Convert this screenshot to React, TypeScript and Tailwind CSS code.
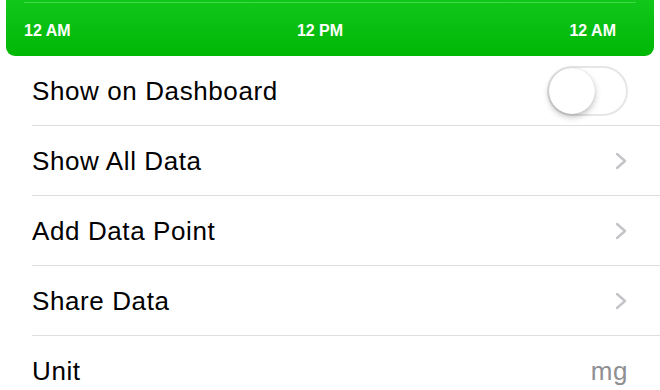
import React from "react";

function Chevron() {
  return (
    <svg width="14" height="18" viewBox="0 0 14 18" fill="none">
      <path d="M3 2 L11 9 L3 16" stroke="#c4c4c8" strokeWidth="2.4" strokeLinecap="round" strokeLinejoin="round" />
    </svg>
  );
}

function Row({ label, right, last }: { label: string; right?: React.ReactNode; last?: boolean }) {
  return (
    <div className="pl-[32px]">
      <div className={`flex items-center justify-between h-[70px] pr-[32px] ${last ? "" : "border-b border-[#dedede]"}`}>
        <span className="text-[26px] tracking-[0.6px] text-black leading-none">{label}</span>
        {right}
      </div>
    </div>
  );
}

export default function App() {
  return (
    <div className="w-[660px] h-[390px] bg-white overflow-hidden" style={{ fontFamily: '"Liberation Sans", Arial, sans-serif' }}>
      <div className="mx-[6px] h-[56px] rounded-b-[9px] bg-gradient-to-b from-[#10c71a] to-[#00b705] relative">
        <div className="absolute left-[18px] right-[18px] top-[2px] h-[1px] bg-[#3dd845]" />
        <div className="flex justify-between items-center pl-[18px] pr-[38px] pt-[23px] text-white font-bold text-[16px] leading-none">
          <span>12 AM</span>
          <span>12 PM</span>
          <span>12 AM</span>
        </div>
      </div>
      <div className="pl-[32px]">
        <div className="flex items-center justify-between h-[70px] pr-[32px] border-b border-[#dedede]">
          <span className="text-[26px] tracking-[0.6px] text-black leading-none">Show on Dashboard</span>
          <div className="w-[81px] h-[50px] rounded-full border-[2px] border-[#e6e6e6] bg-white relative">
            <div className="absolute left-0 top-0 w-[46px] h-[46px] rounded-full bg-white shadow-[0_3px_6px_rgba(0,0,0,0.25),0_0_1px_rgba(0,0,0,0.2)]" />
          </div>
        </div>
      </div>
      <Row label="Show All Data" right={<Chevron />} />
      <Row label="Add Data Point" right={<Chevron />} />
      <Row label="Share Data" right={<Chevron />} />
      <Row label="Unit" right={<span className="text-[26px] tracking-[0.6px] text-[#8e8e93] leading-none">mg</span>} last />
    </div>
  );
}
